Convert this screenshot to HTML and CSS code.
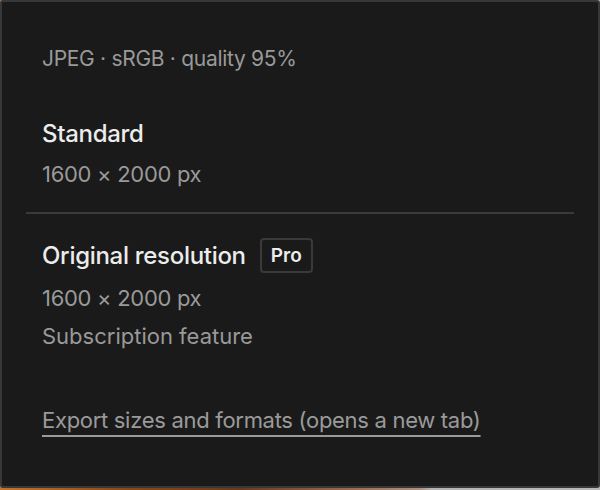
FILE: index.html
```html
<!DOCTYPE html>
<html lang="en">
<head>
<meta charset="utf-8">
<link rel="stylesheet" href="styles.css">
</head>
<body>
<div class="panel">
  <div class="section">
    <p class="meta">JPEG · sRGB · quality 95%</p>
    <div class="option option-first">
      <div class="title-row"><span class="title">Standard</span></div>
      <p class="sub">1600 × 2000 px</p>
    </div>
  </div>
  <hr class="divider">
  <div class="section">
    <div class="option option-pro">
      <div class="title-row"><span class="title">Original resolution</span><span class="badge">Pro</span></div>
      <p class="sub sub-pro">1600 × 2000 px</p>
      <p class="sub note">Subscription feature</p>
    </div>
    <a class="link" href="#">Export sizes and formats (opens a new tab)</a>
  </div>
</div>
</body>
</html>
```
FILE: styles.css
```css
html, body {
  margin: 0;
  padding: 0;
}
body {
  width: 600px;
  height: 490px;
  background: linear-gradient(90deg, #c4752e 0%, #8a4a1c 20%, #6b3a1a 40%, #a07050 60%, #b09080 70%, #b4b4b4 72%, #b8b8b8 100%);
  font-family: Inter, "Noto Sans", sans-serif;
}
.panel {
  box-sizing: border-box;
  width: 600px;
  height: 488px;
  background: #1a1a1a;
  border: 2px solid #383838;
  border-radius: 3px;
  padding: 0 24px;
}
.section {
  padding: 0 16px;
}
.meta {
  margin: 0;
  padding-top: 43px;
  font-size: 21px;
  line-height: 28px;
  color: #999999;
  letter-spacing: -0.3px;
}
.option-first {
  margin-top: 42px;
}
.title-row {
  display: flex;
  align-items: center;
  gap: 14px;
  height: 36px;
}
.title {
  font-size: 24px;
  font-weight: 500;
  color: #ececec;
  letter-spacing: -0.3px;
}
.badge {
  box-sizing: border-box;
  height: 35px;
  padding: 0 9px;
  border: 2px solid #3a3a3a;
  border-radius: 4px;
  display: flex;
  align-items: center;
  font-size: 19px;
  font-weight: 600;
  color: #ececec;
}
.sub {
  margin: 0;
  margin-top: 8px;
  font-size: 22px;
  line-height: 30px;
  color: #999999;
  letter-spacing: -0.3px;
}
.sub-pro {
  margin-top: 10px;
}
.note {
  margin-top: 8px;
  letter-spacing: 0;
}
.divider {
  margin: 23px 0 0 0;
  border: 0;
  height: 2px;
  background: #3a3a3a;
}
.option-pro {
  margin-top: 23px;
}
.link {
  display: inline-block;
  margin-top: 55px;
  font-size: 22px;
  line-height: 28px;
  color: #9a9a9a;
  text-decoration: underline;
  text-decoration-thickness: 2px;
  text-underline-offset: 7px;
  letter-spacing: -0.3px;
}
```
